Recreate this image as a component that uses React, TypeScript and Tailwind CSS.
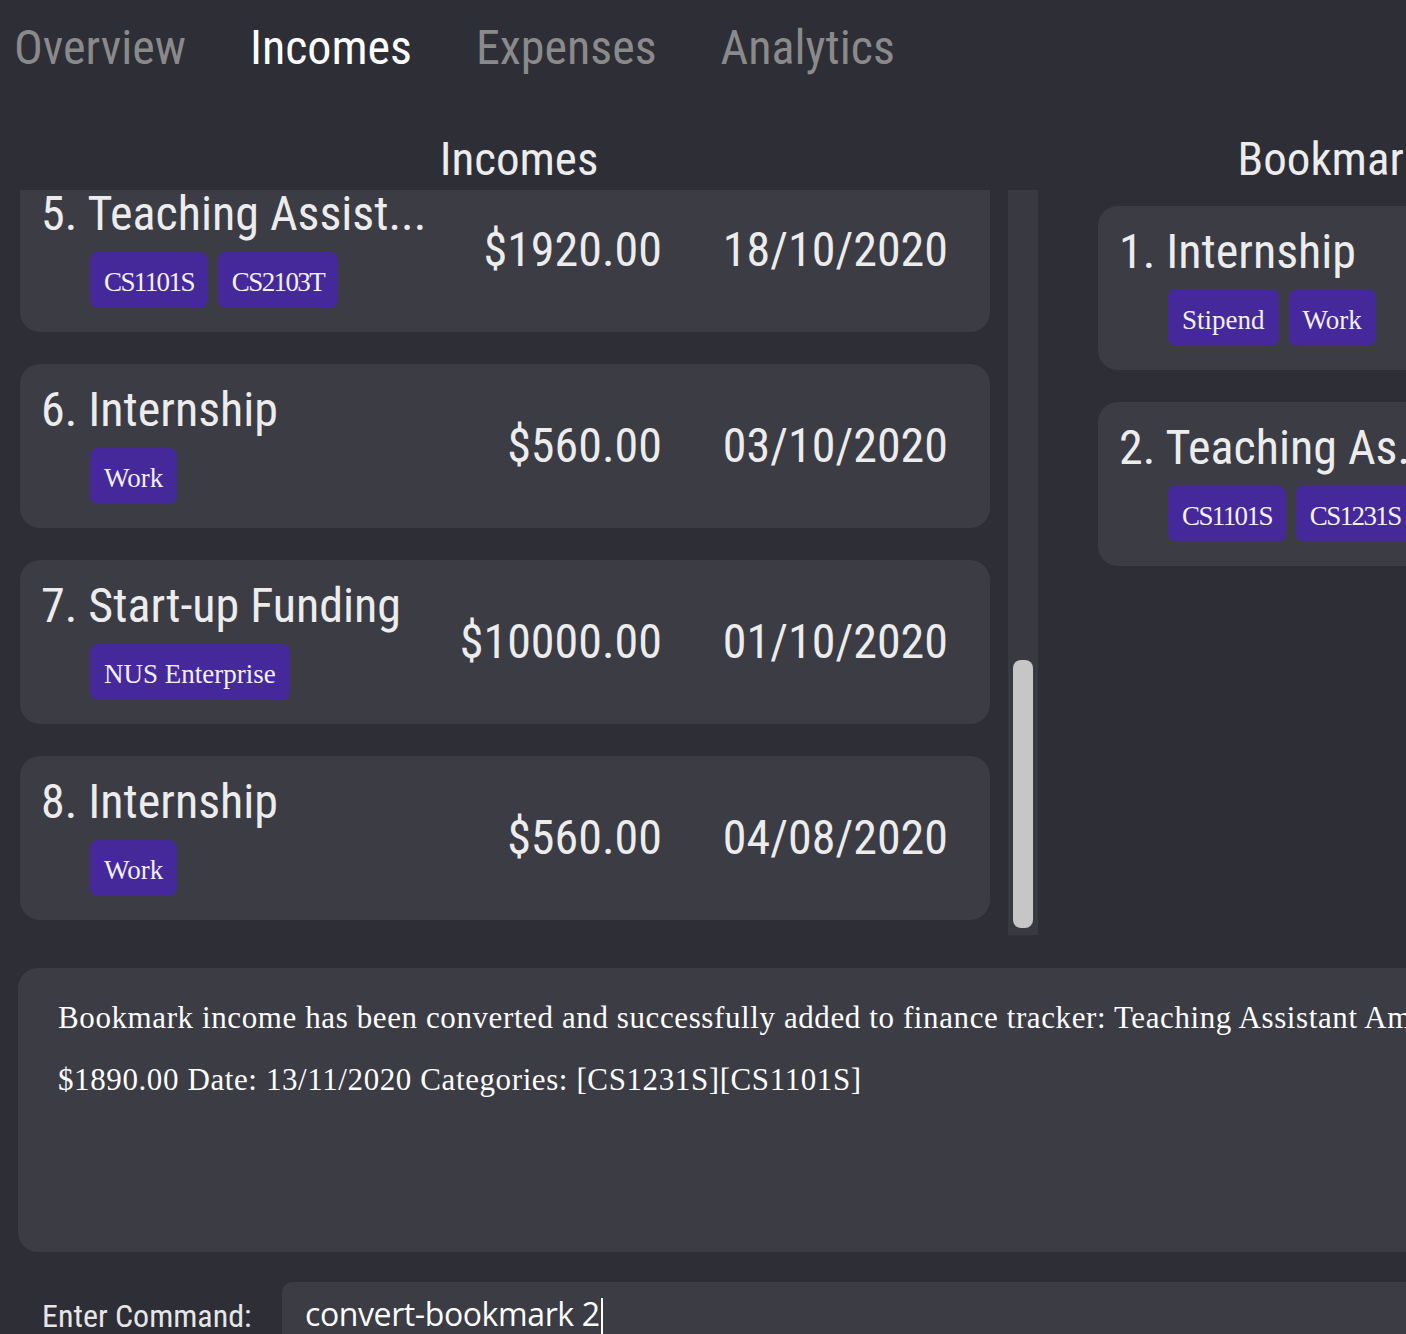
import React from "react";

const cond = "font-['Roboto_Condensed','DejaVu_Sans_Condensed',sans-serif] [font-stretch:condensed]";
const serif = "font-['Liberation_Serif',serif]";

type Row = { title: string; tags: string[]; amount?: string; date?: string };

const incomes: Row[] = [
  { title: "5. Teaching Assist...", tags: ["CS1101S", "CS2103T"], amount: "$1920.00", date: "18/10/2020" },
  { title: "6. Internship", tags: ["Work"], amount: "$560.00", date: "03/10/2020" },
  { title: "7. Start-up Funding", tags: ["NUS Enterprise"], amount: "$10000.00", date: "01/10/2020" },
  { title: "8. Internship", tags: ["Work"], amount: "$560.00", date: "04/08/2020" },
];

const bookmarks: Row[] = [
  { title: "1. Internship", tags: ["Stipend", "Work"] },
  { title: "2. Teaching As...", tags: ["CS1101S", "CS1231S"] },
];

// module codes are set tighter than the word tags
const Tag = ({ label }: { label: string }) => (
  <span
    className={`flex h-[56px] items-center rounded-[8px] bg-[#45299a] px-[14px] pt-[5px] text-[27px] text-[#f2f0f8] ${serif} ${
      /\d/.test(label) ? "tracking-[-1.6px]" : ""
    }`}
  >
    {label}
  </span>
);

const Card = ({ row }: { row: Row }) => (
  <div className="flex h-[164px] shrink-0 items-center rounded-[20px] bg-[#3c3c45] pl-[21px] pr-[42px]">
    <div className="flex min-w-0 flex-1 flex-col self-start pt-[18px]">
      <div className={`whitespace-nowrap text-[48px] leading-[56px] text-[#ececec] ${cond}`}>{row.title}</div>
      <div className="mt-[10px] flex gap-[10px] pl-[49px]">
        {row.tags.map((t) => (
          <Tag key={t} label={t} />
        ))}
      </div>
    </div>
    {row.amount && (
      <>
        <div className={`w-[220px] text-right text-[48px] leading-none text-[#ececec] ${cond}`}>{row.amount}</div>
        <div className={`ml-[46px] w-[240px] text-right text-[48px] leading-none text-[#ececec] ${cond}`}>
          {row.date}
        </div>
      </>
    )}
  </div>
);

export default function App() {
  return (
    <div className="flex h-[1334px] w-[1406px] flex-col overflow-hidden bg-[#2e2e37]">
      {/* tabs */}
      <nav className={`flex h-[96px] shrink-0 items-center gap-[64px] pl-[14px] text-[48px] leading-none ${cond}`}>
        <span className="text-[#8a8a8a]">Overview</span>
        <span className="text-white">Incomes</span>
        <span className="text-[#8a8a8a]">Expenses</span>
        <span className="text-[#8a8a8a]">Analytics</span>
      </nav>

      <div className="flex shrink-0">
        {/* incomes */}
        <section className="flex w-[1038px] shrink-0 flex-col">
          <h2 className={`flex h-[94px] items-center justify-center pt-[30px] text-[47px] leading-none text-[#ececec] ${cond}`}>
            Incomes
          </h2>
          <div className="flex h-[745px] pl-[20px]">
            <div className="flex w-[970px] flex-col overflow-hidden">
              <div className="-mt-[22px] flex flex-col gap-[32px]">
                {incomes.map((r) => (
                  <Card key={r.title + r.date} row={r} />
                ))}
              </div>
            </div>
            <div className="ml-[18px] flex w-[30px] flex-col items-center justify-end bg-[#393942] pb-[7px]">
              <div className="h-[268px] w-[20px] rounded-[8px] bg-[#c6c6c6]" />
            </div>
          </div>
        </section>

        {/* bookmarks */}
        <section className="ml-[60px] flex w-[488px] shrink-0 flex-col">
          <h2 className={`flex h-[94px] items-center justify-center pt-[30px] text-[47px] leading-none text-[#ececec] ${cond}`}>
            Bookmarks
          </h2>
          <div className="flex flex-col gap-[32px] pt-[16px]">
            {bookmarks.map((r) => (
              <Card key={r.title} row={r} />
            ))}
          </div>
        </section>
      </div>

      {/* result box */}
      <div
        className={`ml-[18px] mt-[33px] h-[284px] w-[1500px] shrink-0 rounded-[20px] bg-[#3c3c45] pl-[40px] pt-[19px] text-[31px] leading-[62px] tracking-[0.6px] text-white ${serif}`}
      >
        <div className="whitespace-nowrap">
          Bookmark income has been converted and successfully added to finance tracker: Teaching Assistant Amount:
        </div>
        <div className="whitespace-nowrap">$1890.00 Date: 13/11/2020 Categories: [CS1231S][CS1101S]</div>
      </div>

      {/* command box */}
      <div className="mt-[30px] flex shrink-0 pl-[42px]">
        <label className={`w-[240px] shrink-0 pt-[18px] text-[32px] leading-none text-[#e6e6e6] ${cond}`}>
          Enter Command:
        </label>
        <div className="flex h-[80px] w-[1200px] shrink-0 items-start rounded-[10px] bg-[#3c3c45] pl-[23px] pt-[16px]">
          <span className="font-['Open_Sans',sans-serif] text-[32px] leading-none tracking-[-0.4px] text-white">
            convert-bookmark 2
          </span>
          <span className="ml-[1px] h-[42px] w-[2px] bg-white" />
        </div>
      </div>
    </div>
  );
}
